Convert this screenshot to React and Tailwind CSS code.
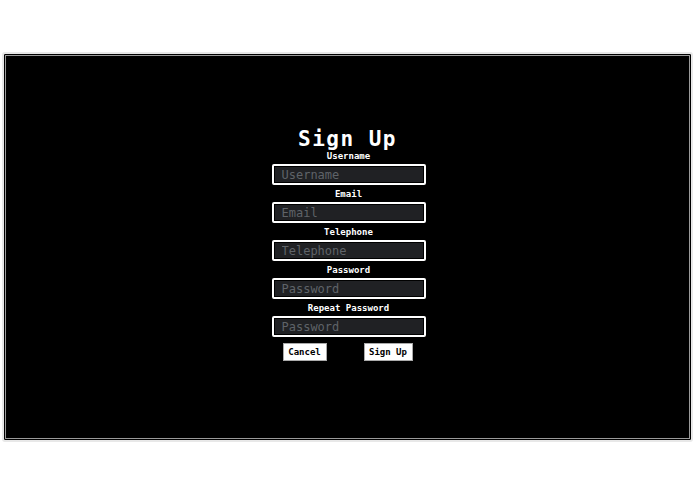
const fields = [
  { label: 'Username', placeholder: 'Username', type: 'text' },
  { label: 'Email', placeholder: 'Email', type: 'email' },
  { label: 'Telephone', placeholder: 'Telephone', type: 'tel' },
  { label: 'Password', placeholder: 'Password', type: 'password' },
  { label: 'Repeat Password', placeholder: 'Password', type: 'password' },
]

const mono = { fontFamily: '"DejaVu Sans Mono", "Liberation Mono", monospace' }

export default function App() {
  return (
    <div className="w-[695px] h-[494px] bg-white pt-[52px] px-[2px]" style={mono}>
      <div className="h-[390px] w-[691px] bg-black border-2 border-[#e8e8e8] rounded-[3px] shadow-[inset_0_0_0_1px_#000,inset_0_0_0_2px_#9a9a9a] flex flex-col items-center pt-[75px]">
        <div className="flex flex-col items-center pl-[2px]">
          <h1 className="text-white font-bold text-[21px] tracking-[1.5px] leading-[18px] h-[18px] mt-[1px] mb-[1px] mr-[2px]">Sign Up</h1>
          {fields.map((f) => (
            <div key={f.label} className="flex flex-col items-center">
              <label className="text-white font-bold text-[9px] leading-[10px] h-[10px] mt-[2px] mb-[3px]">{f.label}</label>
              <input
                type={f.type}
                placeholder={f.placeholder}
                className="w-[154px] h-[21px] bg-[#202124] border-2 border-white rounded-[2px] shadow-[inset_0_0_0_1px_#000] px-[8px] text-[12px] text-white placeholder:text-[#5f6368] outline-none mb-[2px]"
                style={mono}
              />
            </div>
          ))}
          <div className="flex gap-[37px] mt-[4px] pr-[2px]">
            <button className="w-[44px] h-[18px] bg-white border border-[#aaa] text-black font-bold text-[9px] leading-none" style={mono}>Cancel</button>
            <button className="w-[49px] h-[18px] bg-white border border-[#aaa] text-black font-bold text-[9px] leading-none" style={mono}>Sign Up</button>
          </div>
        </div>
      </div>
    </div>
  )
}
